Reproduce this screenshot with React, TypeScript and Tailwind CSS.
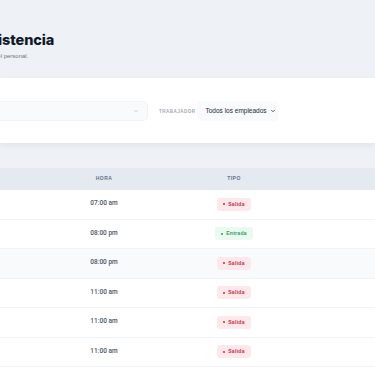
import { ChevronDown } from "lucide-react";

type Registro = {
  nombre: string;
  hora: string;
  tipo: "Entrada" | "Salida";
};

const registros: Registro[] = [
  { nombre: "Carlos Ramírez", hora: "07:00 am", tipo: "Salida" },
  { nombre: "Lucía Gómez", hora: "08:00 pm", tipo: "Entrada" },
  { nombre: "Lucía Gómez", hora: "08:00 pm", tipo: "Salida" },
  { nombre: "Mario Torres", hora: "11:00 am", tipo: "Salida" },
  { nombre: "Mario Torres", hora: "11:00 am", tipo: "Salida" },
  { nombre: "Ana Castillo", hora: "11:00 am", tipo: "Salida" },
  { nombre: "Ana Castillo", hora: "11:00 am", tipo: "Salida" },
];

function TipoBadge({ tipo }: { tipo: Registro["tipo"] }) {
  const salida = tipo === "Salida";
  return (
    <span
      className={`inline-flex items-center gap-[3px] rounded-[3px] px-[6px] h-[13px] text-[5px] font-bold tracking-[0.3px] ${
        salida ? "bg-[#fde9ec] text-[#c8283f]" : "bg-[#eafaf0] text-[#2f9a5a]"
      }`}
    >
      <span className={`w-[2px] h-[2px] rounded-full ${salida ? "bg-[#c8283f]" : "bg-[#2f9a5a]"}`}></span>
      {tipo}
    </span>
  );
}

export default function App() {
  return (
    <div
      className="w-[375px] h-[375px] overflow-hidden bg-[#eef2f6]"
      style={{ fontFamily: "'Liberation Sans', Arial, sans-serif" }}
    >
      {/* Encabezado */}
      <header className="h-[78px] pt-[31px] whitespace-nowrap">
        <h1
          className="-ml-[21px] text-[14.5px] leading-[17px] font-extrabold text-[#111827] tracking-[-0.1px]"
          style={{ fontFamily: "Inter, sans-serif" }}
        >
          Asistencia
        </h1>
        <p className="-ml-[27px] mt-[4px] text-[6px] text-[#6b7280]">Control del personal.</p>
      </header>

      {/* Filtros */}
      <section className="relative z-10 h-[65px] bg-white shadow-[0_2px_6px_rgba(15,23,42,0.07)] flex items-center whitespace-nowrap">
        <div className="-ml-[60px] flex items-center">
          <div className="w-[208px] h-[20px] rounded-[5px] bg-[#f9fafb] border border-[#f1f3f6] flex items-center justify-between px-[8px]">
            <span className="text-[6.5px] text-[#1f2937]">Esta semana</span>
            <ChevronDown className="w-[6px] h-[6px] text-[#9ca3af]" strokeWidth={2} />
          </div>
          <span className="ml-[11px] mt-[3px] text-[4.5px] font-bold tracking-[0.5px] text-[#a3a7ae]">TRABAJADOR</span>
          <div className="ml-[1px] w-[82px] h-[20px] rounded-[5px] bg-[#f9fafb] flex items-center justify-between pl-[9px] pr-[3px]">
            <span className="text-[6.5px] text-[#1f2937]">Todos los empleados</span>
            <ChevronDown className="w-[6px] h-[6px] text-[#1f2937]" strokeWidth={3} />
          </div>
        </div>
      </section>

      {/* Tabla */}
      <div className="mt-[25px] -ml-[91px] w-[560px] bg-white">
        <div className="grid grid-cols-[130px_130px_130px_170px] h-[22px] items-center bg-[#e5e9f0] text-[5px] font-bold tracking-[0.5px] text-[#64748b]">
          <span className="text-center">TRABAJADOR</span>
          <span className="text-center">HORA</span>
          <span className="text-center">TIPO</span>
          <span></span>
        </div>
        {registros.map((r, i) => (
          <div
            key={i}
            className={`grid grid-cols-[130px_130px_130px_170px] h-[29.5px] items-center border-b border-[#f1f4f7] ${
              i === 2 ? "bg-[#f8fafc]" : "bg-white"
            }`}
          >
            <span className="text-center text-[6.5px] text-[#334155]">{r.nombre}</span>
            <span
              className="text-center text-[6.5px] font-medium text-[#4b5563]"
              style={{ fontFamily: "Roboto, sans-serif" }}
            >
              {r.hora}
            </span>
            <span className="flex justify-center">
              <TipoBadge tipo={r.tipo} />
            </span>
            <span></span>
          </div>
        ))}
      </div>
    </div>
  );
}
